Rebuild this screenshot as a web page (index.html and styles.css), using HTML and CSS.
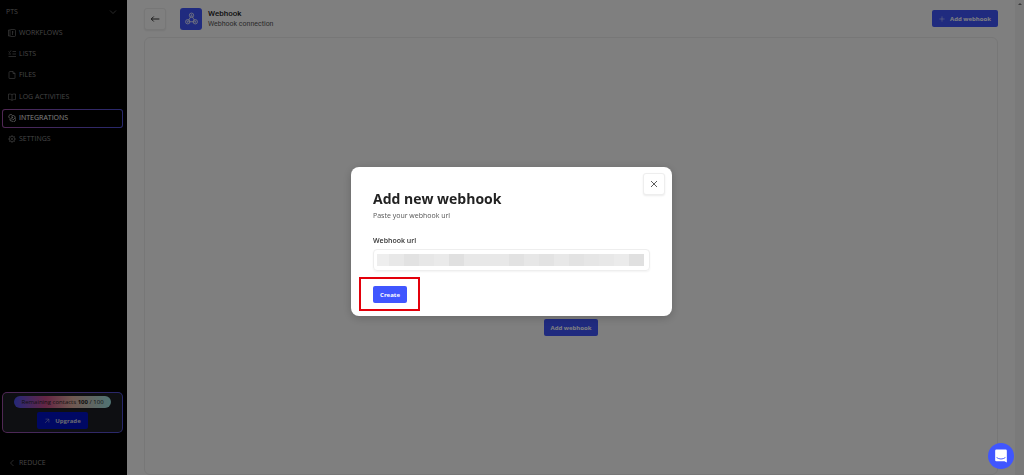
FILE: index.html
```
<!DOCTYPE html>
<html lang="en">
<head>
    <meta charset="UTF-8">
    <meta name="viewport" content="width=device-width, initial-scale=1.0">
    <title>Webhook</title>
    <link rel="stylesheet" href="styles.css">
</head>
<body>
    <div class="app">
        <aside class="sidebar">
            <button class="team" type="button">
                <span>PTS</span>
                <svg class="icon" viewBox="0 0 16 16"><path d="M2 5l6 6 6-6"/></svg>
            </button>
            <nav class="menu">
                <a href="#">
                    <svg class="icon" viewBox="0 0 16 16"><rect x="4" y="1" width="11" height="14" rx="2"/><path d="M4 2H1v12h3M9 4v8M9 6h2"/></svg>
                    WORKFLOWS
                </a>
                <a href="#">
                    <svg class="icon" viewBox="0 0 16 16"><path d="M1 3l2 2 3-4M9 3h7M1 8h5M9 8h7M1 13h15"/></svg>
                    LISTS
                </a>
                <a href="#">
                    <svg class="icon" viewBox="0 0 16 16"><path d="M4 1h6l4 4v9a1 1 0 0 1-1 1H3a1 1 0 0 1-1-1V3a2 2 0 0 1 2-2zM10 1v4h4"/></svg>
                    FILES
                </a>
                <a href="#">
                    <svg class="icon" viewBox="0 0 16 16"><path d="M8 3v12M8 3C6 2 4 2 1 2v11c3 0 5 0 7 2 2-2 4-2 7-2V2c-3 0-5 0-7 1z"/></svg>
                    LOG ACTIVITIES
                </a>
                <a href="#" class="active">
                    <svg class="icon" viewBox="0 0 16 16"><path d="M5 9a4 4 0 1 1 4-6h2a4 4 0 0 1 2 7M6 6h4l-4 5M13 8a4 4 0 1 1-5 6H6a3 3 0 0 1-2-4M9 11h3"/></svg>
                    INTEGRATIONS
                </a>
                <a href="#">
                    <svg class="icon" viewBox="0 0 16 16"><circle cx="8" cy="8" r="5.5"/><circle cx="8" cy="8" r="1.5"/><path d="M8 0v3M8 13v3M0 8h3M13 8h3M2.5 2.5l2 2M11.5 11.5l2 2M13.5 2.5l-2 2M4.5 11.5l-2 2"/></svg>
                    SETTINGS
                </a>
            </nav>
            <div class="plan">
                <p class="quota">Remaining contacts <b>100</b> / 100</p>
                <button class="upgrade" type="button">
                    <svg class="icon" viewBox="0 0 16 16"><path d="M3 13L13 3M4 3h9v9"/></svg>
                    Upgrade
                </button>
            </div>
            <button class="reduce" type="button">
                <svg class="icon" viewBox="0 0 16 16"><path d="M11 2L5 8l6 6"/></svg>
                REDUCE
            </button>
        </aside>

        <main class="content">
            <header class="top">
                <button class="square" type="button" aria-label="Back">
                    <svg class="arrow" viewBox="0 0 16 16"><path d="M15 8H2M6 4L2 8l4 4"/></svg>
                </button>
                <div class="logo">
                    <svg viewBox="0 0 24 24"><circle cx="12" cy="6" r="4"/><circle cx="5" cy="18" r="4"/><circle cx="19" cy="18" r="4"/><circle cx="12" cy="6" r="1"/><circle cx="5" cy="18" r="1"/><circle cx="19" cy="18" r="1"/><path d="M11 8l-5 8M13 8l5 8M7 18h10"/></svg>
                </div>
                <div class="heading">
                    <h1>Webhook</h1>
                    <p>Webhook connection</p>
                </div>
                <button class="btn add" type="button">
                    <svg class="icon" viewBox="0 0 16 16"><path d="M8 1v14M1 8h14"/></svg>
                    Add webhook
                </button>
            </header>
            <section class="panel">
                <button class="btn" type="button">Add webhook</button>
            </section>
        </main>
        <div class="scroll"></div>
    </div>

    <div class="overlay">
        <form class="modal" role="dialog" aria-labelledby="modalTitle">
            <button class="square close" type="button" aria-label="Close">
                <svg viewBox="0 0 16 16"><path d="M2 2l12 12M14 2L2 14"/></svg>
            </button>
            <h2 id="modalTitle">Add new webhook</h2>
            <p>Paste your webhook url</p>
            <label for="url">Webhook url</label>
            <input id="url" type="text">
            <div class="action">
                <button class="btn create" type="button">Create</button>
            </div>
        </form>
    </div>

    <button class="chat" type="button" aria-label="Open chat">
        <svg viewBox="0 0 24 24"><path fill="#fff" d="M4 1h16a2 2 0 0 1 2 2v20l-4-2H4a2 2 0 0 1-2-2V3a2 2 0 0 1 2-2z"/><path fill="none" stroke="#4056ff" stroke-width="1.6" stroke-linecap="round" d="M5 15c4 3 10 3 14 0"/></svg>
    </button>
</body>
</html>
```

FILE: styles.css
```
*{
    margin: 0;
    padding: 0;
    box-sizing: border-box;
}
body{
    font-family: "Open Sans", "Noto Sans", sans-serif;
    font-size: 7px;
    line-height: 10px;
    color: #333;
    background-color: #fff;
    overflow: hidden;
}
button, input{
    font: inherit;
    color: inherit;
    border: none;
    background: none;
}
svg{
    display: block;
    flex: none;
    fill: none;
    stroke: currentColor;
}
.icon{
    width: 8px;
    height: 8px;
    stroke-width: 1.2;
}
.app{
    display: flex;
    height: 100vh;
}

/* sidebar */
.sidebar{
    display: flex;
    flex-direction: column;
    width: 127px;
    padding: 0 4px 2px 2px;
    background-color: #000;
    color: #8c8c8c;
}
.team{
    display: flex;
    justify-content: space-between;
    align-items: center;
    height: 23px;
    padding: 0 6px 0 4px;
}
.menu{
    display: flex;
    flex-direction: column;
    justify-content: space-between;
    height: 126px;
}
.menu a{
    display: flex;
    align-items: center;
    gap: 3px;
    height: 19px;
    padding: 0 5px;
    border: 1px solid transparent;
    border-radius: 3px;
    color: inherit;
    text-decoration: none;
}
.menu .active{
    color: #fff;
    background: linear-gradient(#000, #000) padding-box, linear-gradient(90deg, #a050a8, #5050d8) border-box;
}
.plan{
    display: flex;
    flex-direction: column;
    align-items: center;
    gap: 4px;
    margin-top: auto;
    padding: 3px;
    border: 1px solid transparent;
    border-radius: 5px;
    background: linear-gradient(#1c1f24, #1c1f24) padding-box, linear-gradient(90deg, #a050a8, #5050d8) border-box;
}
.quota{
    width: 97px;
    font-size: 6px;
    line-height: 12px;
    border-radius: 6px;
    text-align: center;
    white-space: nowrap;
    color: #222;
    background: linear-gradient(90deg, #4a50f0, #cc4c88 33%, #e0b0a0 60%, #a0e8e8);
}
.upgrade{
    display: flex;
    justify-content: center;
    align-items: center;
    gap: 5px;
    width: 51px;
    height: 17px;
    border-radius: 2px;
    font-size: 6px;
    font-weight: bold;
    background-color: #0010c8;
    color: #d0d0e0;
}
.upgrade .icon{
    width: 6px;
    height: 6px;
}
.reduce{
    display: flex;
    align-items: center;
    gap: 3px;
    height: 20px;
    margin-top: 20px;
    padding: 0 6px;
}

/* content */
.content{
    flex: 1;
    display: flex;
    flex-direction: column;
    padding: 0 17px;
}
.top{
    display: flex;
    align-items: center;
    height: 37px;
}
.square{
    display: flex;
    justify-content: center;
    align-items: center;
    width: 22px;
    height: 22px;
    border: 1px solid #eee;
    border-radius: 3px;
    background-color: #fff;
    box-shadow: 0 1px 2px rgba(0, 0, 0, 0.08);
}
.square svg{
    width: 8px;
    height: 8px;
    stroke-width: 1.6;
}
.square .arrow{
    width: 10px;
    height: 10px;
}
.logo{
    display: flex;
    justify-content: center;
    align-items: center;
    width: 22px;
    height: 22px;
    margin: 0 6px 0 14px;
    border-radius: 3px;
    background-color: #4056ff;
    color: #fff;
}
.logo svg{
    width: 13px;
    height: 13px;
    stroke-width: 1.4;
}
.heading{
    font-family: Roboto, sans-serif;
}
.heading h1{
    font-size: 8px;
    line-height: 11px;
    font-weight: 500;
    color: #222;
}
.heading p{
    line-height: 11px;
    color: #555;
}
.btn{
    display: flex;
    justify-content: center;
    align-items: center;
    gap: 5px;
    width: 54px;
    height: 17px;
    border-radius: 2px;
    font-size: 6px;
    font-weight: bold;
    white-space: nowrap;
    background-color: #4056ff;
    color: #fff;
}
.add{
    width: 66px;
    margin-left: auto;
}
.add .icon{
    width: 6px;
    height: 6px;
}
.panel{
    flex: 1;
    display: flex;
    justify-content: center;
    align-items: flex-start;
    padding-top: 281px;
    border: 1px solid #eee;
    border-radius: 6px;
}
.scroll{
    width: 9px;
    background-color: #f5f5f5;
}
.scroll::before{
    content: "";
    display: block;
    width: 0;
    margin: 3px auto 0;
    border: 2px solid transparent;
    border-top: none;
    border-bottom-color: #777;
}

/* modal */
.overlay{
    position: fixed;
    inset: 0;
    display: flex;
    justify-content: center;
    align-items: center;
    padding: 8px 1px 0 0;
    background-color: rgba(0, 0, 0, 0.5);
}
.modal{
    position: relative;
    width: 321px;
    padding: 22px;
    padding-bottom: 13px;
    border-radius: 8px;
    background-color: #fff;
    box-shadow: 0 2px 10px rgba(0, 0, 0, 0.2);
}
.close{
    position: absolute;
    top: 6px;
    right: 7px;
}
.modal h2{
    font-size: 14px;
    line-height: 20px;
    color: #222;
}
.modal p{
    margin-top: 2px;
    color: #555;
}
.modal label{
    display: block;
    margin-top: 15px;
    font-weight: 600;
}
.modal input{
    display: block;
    width: 100%;
    height: 22px;
    margin: 3px 0 15px;
    padding: 4px 3px;
    border: 1px solid #eee;
    border-radius: 4px;
    box-shadow: 0 1px 2px rgba(0, 0, 0, 0.05);
    background: linear-gradient(90deg,
        #eee 12px, #e8e8e8 12px 27px, #e2e2e2 27px 42px, #e7e7e7 42px 57px,
        #eaeaea 57px 72px, #e0e0e0 72px 87px, #e8e8e8 87px 132px, #e2e2e2 132px 147px,
        #e7e7e7 147px 162px, #e3e3e3 162px 177px, #e8e8e8 177px 192px, #e3e3e3 192px 207px,
        #e6e6e6 207px 222px, #e8e8e8 222px 237px, #ebebeb 237px 252px, #e0e0e0 252px 267px, transparent 267px)
        content-box no-repeat;
}
.action{
    position: relative;
    width: 34px;
}
.create{
    width: 34px;
}
.action::after{
    content: "";
    position: absolute;
    inset: -9px -13px -8px -14px;
    border: 2px solid #e3000b;
    pointer-events: none;
}

.chat{
    position: fixed;
    right: 10px;
    bottom: 6px;
    display: flex;
    justify-content: center;
    align-items: center;
    width: 26px;
    height: 26px;
    border-radius: 50%;
    background-color: #4056ff;
}
.chat svg{
    width: 14px;
    height: 14px;
    stroke: none;
}
```
